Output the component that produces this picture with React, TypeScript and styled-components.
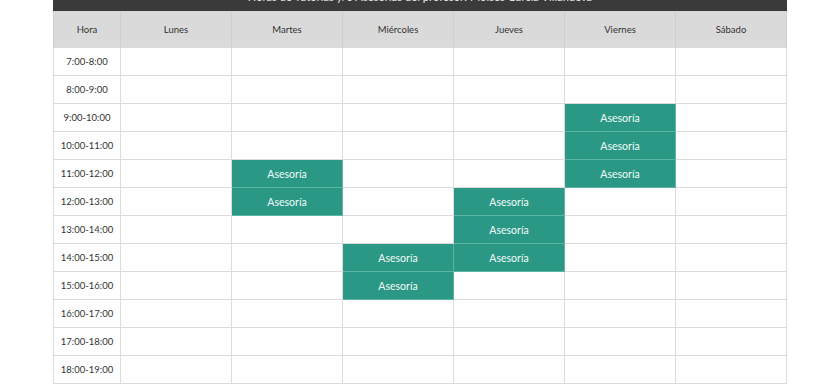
import React from "react";
import styled, { createGlobalStyle } from "styled-components";

const Global = createGlobalStyle`
  html, body { margin: 0; padding: 0; background: #fff; }
  body { font-family: Lato, "Open Sans", sans-serif; overflow: hidden; }
`;

const Page = styled.div`
  width: 734px;
  margin: -19px auto 0;
`;

const TitleBar = styled.div`
  height: 30px;
  background: #3a3a3a;
  color: #e8e8e8;
  font-size: 11px;
  display: flex;
  align-items: center;
  justify-content: center;
  letter-spacing: 0.1px;
`;

const Table = styled.table`
  width: 734px;
  border-collapse: collapse;
  table-layout: fixed;
  font-size: 9.5px;
  color: #333;
`;

const Col = styled.col<{ $w?: number }>`
  width: ${(p) => (p.$w ? `${p.$w}px` : "auto")};
`;

const Th = styled.th`
  height: 36px;
  background: #dadada;
  font-weight: 400;
  border-left: 1px solid #cfcfcf;
  border-right: 1px solid #cfcfcf;
  padding: 0;
  text-align: center;
`;

const Td = styled.td<{ $busy?: boolean }>`
  height: 27px;
  padding: 0;
  text-align: center;
  border: 1px solid ${(p) => (p.$busy ? "#5db4a3" : "#dcdcdc")};
  background: ${(p) => (p.$busy ? "#2b9885" : "#fff")};
  color: ${(p) => (p.$busy ? "#f2fbf9" : "#333")};
  font-size: ${(p) => (p.$busy ? "10.5px" : "9.5px")};
`;

const days = ["Lunes", "Martes", "Miércoles", "Jueves", "Viernes", "Sábado"];
const hours = [7, 8, 9, 10, 11, 12, 13, 14, 15, 16, 17, 18];
const busy: Record<string, boolean> = {
  "Viernes-9": true,
  "Viernes-10": true,
  "Viernes-11": true,
  "Martes-11": true,
  "Martes-12": true,
  "Jueves-12": true,
  "Jueves-13": true,
  "Jueves-14": true,
  "Miércoles-14": true,
  "Miércoles-15": true,
};

export default function App() {
  return (
    <>
      <Global />
      <Page>
        <TitleBar>Horas de Tutorías y/o Asesorías del profesor: Moisés García Villanueva</TitleBar>
        <Table>
          <colgroup>
            <Col $w={67} />
            {days.map((d) => (
              <Col key={d} />
            ))}
          </colgroup>
          <thead>
            <tr>
              <Th>Hora</Th>
              {days.map((d) => (
                <Th key={d}>{d}</Th>
              ))}
            </tr>
          </thead>
          <tbody>
            {hours.map((h) => (
              <tr key={h}>
                <Td>{`${h}:00-${h + 1}:00`}</Td>
                {days.map((d) => {
                  const b = busy[`${d}-${h}`];
                  return (
                    <Td key={d} $busy={b}>
                      {b ? "Asesoría" : ""}
                    </Td>
                  );
                })}
              </tr>
            ))}
          </tbody>
        </Table>
      </Page>
    </>
  );
}
